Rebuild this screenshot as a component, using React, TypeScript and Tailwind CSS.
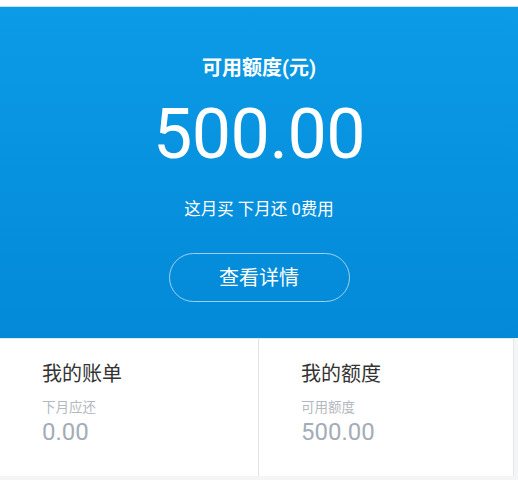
import React from "react";

export default function App() {
  const font = { fontFamily: 'Roboto, "Noto Sans CJK SC", sans-serif' };
  return (
    <div className="w-[518px] h-[480px] bg-[#f4f5f6] flex flex-col overflow-hidden" style={font}>
      <div className="h-[7px] bg-white border-b border-[#bfe3f5]" />
      <div className="h-[331px] bg-gradient-to-b from-[#0c9be6] to-[#0389d7] flex flex-col items-center text-white">
        <div className="mt-[48px] text-[20px] leading-[26px] font-bold">可用额度(元)</div>
        <div className="mt-[18px] text-[70px] leading-[70px] font-normal tracking-[-0.5px]">500.00</div>
        <div className="mt-[29px] text-[16.5px] leading-[24px]">这月买 下月还 0费用</div>
        <button className="mt-[31px] w-[181px] h-[49px] rounded-full border border-white/60 text-[20px] text-white flex items-center justify-center">
          查看详情
        </button>
      </div>
      <div className="h-[138px] bg-white flex border-t border-[#d7eef9] w-[514px] border-r border-r-[#e6e6e6]">
        <div className="w-[259px] border-r border-[#e3e3e3] pl-[42px] pt-[21px]">
          <div className="text-[20px] leading-[28px] text-[#333333]">我的账单</div>
          <div className="mt-[9px] text-[13.5px] leading-[20px] text-[#b3b8c0]">下月应还</div>
          <div className="mt-[3px] text-[24px] leading-[24px] text-[#a4acb8]">0.00</div>
        </div>
        <div className="flex-1 pl-[42px] pt-[21px]">
          <div className="text-[20px] leading-[28px] text-[#333333]">我的额度</div>
          <div className="mt-[9px] text-[13.5px] leading-[20px] text-[#b3b8c0]">可用额度</div>
          <div className="mt-[3px] text-[24px] leading-[24px] text-[#a4acb8]">500.00</div>
        </div>
      </div>
    </div>
  );
}
